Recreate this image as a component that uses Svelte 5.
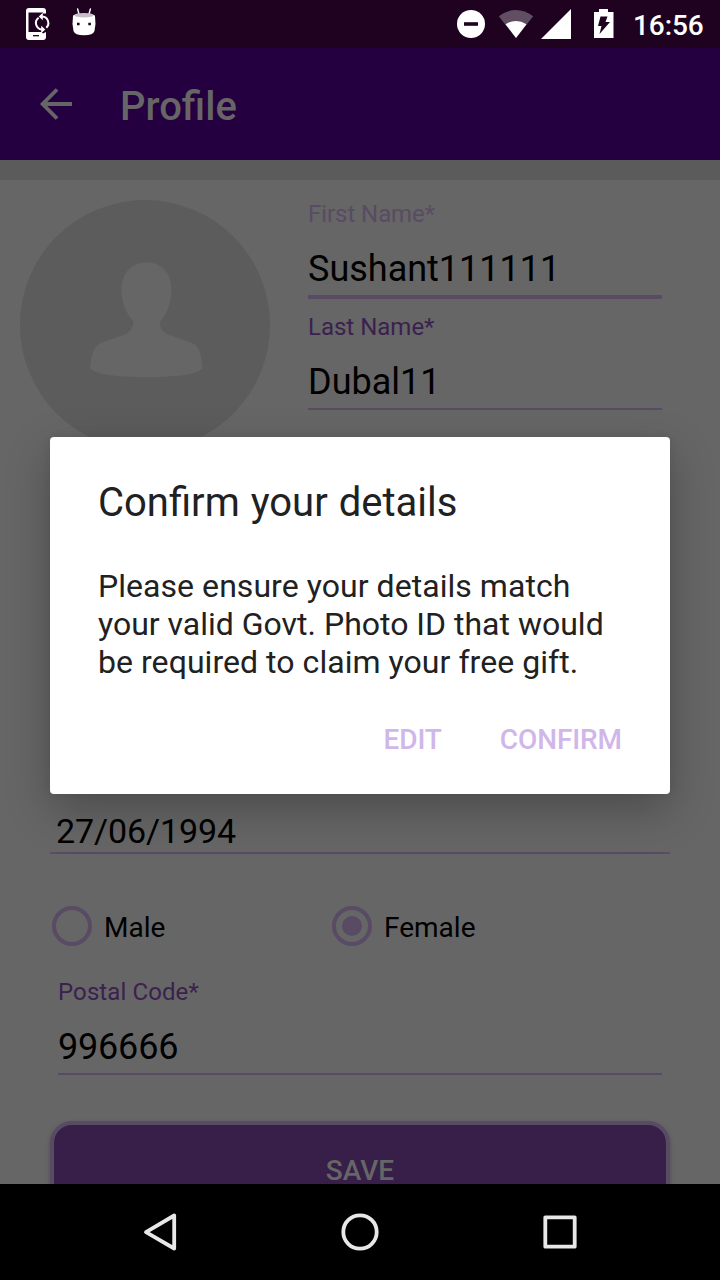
<script>
  const lines = [
    'Please ensure your details match',
    'your valid Govt. Photo ID that would',
    'be required to claim your free gift.'
  ];
  const genders = [
    { name: 'Male', checked: false },
    { name: 'Female', checked: true }
  ];
</script>

<div class="screen">
  <header class="status">
    <svg class="notices" width="100" height="48" viewBox="0 0 100 48">
      <path fill="#fff" d="M29 8H43Q46 8 46 11V13.500H43V12.500H28.500V32H41.500L43 33.500L46 32V37Q46 40 43 40H29Q26 40 26 37V11Q26 8 29 8Z" />
      <path stroke="#1e0220" stroke-width="1.3" d="M33 35.700H39" />
      <g fill="none" stroke="#fff" stroke-width="2">
        <path d="M38.600 17.800A6.500 6.500 0 0 0 41.800 29.500" />
        <path d="M42.200 16.500A6.500 6.500 0 0 1 46.300 27.700" />
      </g>
      <path fill="#fff" d="M42.800 12.800V20.200L38.700 16.500ZM41.200 25.800V33.200L45.300 29.500Z" />
      <path stroke="#fff" stroke-width="1.400" stroke-linecap="round" d="M77.600 9L79 14M90.400 9L89 14" />
      <path fill="#fff" d="M73 16C73 13 95 13 95 16Q96.200 24 94.500 31Q93 35.300 84 35.300Q75 35.300 73.500 31Q71.800 24 73 16Z" />
      <ellipse cx="84" cy="15.200" rx="9.600" ry="2.300" fill="#c5bdc7" />
      <path fill="#1e0220" d="M77 22.700h2.600v2.600H77zM88.300 22.700h2.600v2.600h-2.600z" />
    </svg>
    <svg width="170" height="48" viewBox="450 0 170 48">
      <circle cx="471" cy="24" r="14" fill="#fff" />
      <path stroke="#1e0220" stroke-width="3.600" d="M464 24H478" />
      <path fill="#614e63" d="M498.800 16.200Q516 3.800 533.200 16.200L516 38Z" />
      <path fill="#fff" d="M505.500 24.200Q516 17.800 526.500 24.200L516 38Z" />
      <path fill="#fff" d="M571 9V39H541Z" />
      <path fill="#fff" d="M599 9H608V12H613.500V38H594V12H599Z" />
      <path fill="#1e0220" d="M600.500 16.500H607.500L605.500 22H610L599.500 34L601.500 26H598Z" />
    </svg>
    <span class="clock">16:56</span>
  </header>

  <div class="appbar">
    <svg width="34" height="34" viewBox="0 0 34 34">
      <path fill="none" stroke="#666" stroke-width="3.900" d="M33 17H4M18 2.500L3.700 17L18 31.500" />
    </svg>
    <h1>Profile</h1>
  </div>
  <div class="strip"></div>

  <main>
    <div class="identity">
      <svg width="250" height="250" viewBox="20 200 250 250">
        <circle cx="145" cy="325" r="125" fill="#5c5c5c" />
        <path fill="#666" d="M146.500 262.500C162 262.500 171.500 273 171.500 290C171.500 302 167 314 160 321.500C160 328 162 331 167 334L192 343C201 347 201.500 358 202.500 368C196 375 177 377 146.500 377C116 377 97 375 90 368C91 358 92 347 101 343L126 334C131 331 133 328 133.500 321.500C126 314 121.500 302 121.500 290C121.500 273 131 262.500 146.500 262.500Z" />
      </svg>
      <div class="names">
        <div class="field active">
          <span class="label">First Name*</span>
          <span class="value">Sushant111111</span>
        </div>
        <div class="field">
          <span class="label">Last Name*</span>
          <span class="value">Dubal11</span>
        </div>
      </div>
    </div>

    <div class="date">27/06/1994</div>

    <div class="genders">
      {#each genders as g}
        <div class="option">
          <span class="radio">{#if g.checked}<i></i>{/if}</span>
          <span class="name">{g.name}</span>
        </div>
      {/each}
    </div>

    <div class="field postal">
      <span class="label">Postal Code*</span>
      <span class="value">996666</span>
    </div>

    <div class="save">SAVE</div>
  </main>

  <nav>
    <svg width="720" height="96" viewBox="0 1184 720 96" fill="none" stroke="#e8e8e8" stroke-width="3.800" stroke-linejoin="round">
      <path d="M174.200 1215.500V1248.500L146 1232.200Z" />
      <circle cx="360" cy="1232" r="16.700" />
      <rect x="545.300" y="1217.300" width="29.400" height="29.400" />
    </svg>
  </nav>

  <section class="dialog">
    <h2>Confirm your details</h2>
    <p>{#each lines as line}<span>{line}</span>{/each}</p>
    <div class="actions"><span>EDIT</span><span>CONFIRM</span></div>
  </section>
</div>

<style>
  .screen {
    position: relative;
    width: 720px;
    height: 1280px;
    overflow: hidden;
    display: flex;
    flex-direction: column;
    background: #666;
    font-family: Roboto, sans-serif;
    color: #000;
    white-space: nowrap;
  }
  svg { display: block; flex: none; }
  .status {
    height: 48px;
    display: flex;
    background: #1e0220;
    color: #fff;
  }
  .notices { margin-right: 350px; }
  .clock {
    margin-left: 13px;
    padding-top: 2px;
    font-size: 28px;
    font-weight: 500;
    line-height: 48px;
    letter-spacing: -0.1px;
  }
  .appbar {
    height: 112px;
    display: flex;
    align-items: center;
    padding-left: 39px;
    background: #250041;
    color: #666;
  }
  h1 {
    margin: 6px 0 0 47px;
    font-size: 40px;
    font-weight: 500;
    line-height: 48px;
  }
  .strip { height: 20px; background: #5b5b5b; }
  main {
    height: 1004px;
    overflow: hidden;
    box-sizing: border-box;
    padding-top: 20px;
  }
  .identity { display: flex; padding-left: 20px; height: 250px; }
  .names { margin-left: 38px; width: 354px; }
  .field {
    box-sizing: border-box;
    display: flex;
    flex-direction: column;
    height: 97px;
    border-bottom: 2px solid #584b63;
  }
  .active { height: 99px; border-bottom-width: 4px; margin-bottom: 14px; }
  .label {
    font-size: 24px;
    line-height: 28px;
    color: #3b214f;
    margin-bottom: 20px;
  }
  .active .label { color: #584b63; letter-spacing: -0.06px; }
  .postal .label { letter-spacing: 0.1px; }
  .value { font-size: 36px; line-height: 42px; }
  .postal .value { letter-spacing: -0.2px; }
  .date {
    box-sizing: border-box;
    margin: 361px 50px 0;
    height: 43px;
    padding-left: 6px;
    border-bottom: 2px solid #584b63;
    font-size: 34px;
    line-height: 40px;
    letter-spacing: -0.1px;
  }
  .genders { display: flex; padding: 52px 0 0 52px; }
  .option { width: 280px; height: 40px; display: flex; }
  .radio {
    box-sizing: border-box;
    width: 40px;
    height: 40px;
    border: 4px solid #584b63;
    border-radius: 50%;
    display: flex;
    align-items: center;
    justify-content: center;
  }
  .radio i { width: 20px; height: 20px; border-radius: 50%; background: #584b63; }
  .name { margin-left: 12px; font-size: 28px; line-height: 44px; }
  .postal { margin: 32px 58px 0; }
  .save {
    box-sizing: border-box;
    margin: 46px 50px 0;
    height: 96px;
    border: 4px solid #584b63;
    border-radius: 22px;
    background: #371f4a;
    box-shadow: 0 2px 4px rgba(0, 0, 0, .25);
    color: #666;
    font-size: 28px;
    font-weight: 500;
    line-height: 92px;
    text-align: center;
  }
  nav { height: 96px; background: #000; flex: none; }
  .dialog {
    position: absolute;
    left: 50px;
    top: 437px;
    width: 620px;
    height: 357px;
    box-sizing: border-box;
    padding: 42px 48px 0;
    background: #fff;
    border-radius: 4px;
    box-shadow: 0 16px 44px rgba(0, 0, 0, .26), 0 0 8px rgba(0, 0, 0, .06);
    color: #212121;
  }
  /* Small tracking keeps the "fi" pair evenly set; ligatures stay on. */
  h2 {
    margin: 0;
    font-size: 40px;
    font-weight: 400;
    line-height: 48px;
    letter-spacing: 0;
    word-spacing: 1px;
  }
  p { margin: 40px 0 0; font-size: 32px; line-height: 38px; }
  p span { display: block; }
  p span:first-child, p span:last-child { letter-spacing: 0.05px; }
  .actions {
    display: flex;
    justify-content: flex-end;
    gap: 58px;
    margin-top: 39px;
    font-size: 28px;
    font-weight: 500;
    line-height: 40px;
    letter-spacing: -0.1px;
    color: #d1b6ea;
  }
</style>
